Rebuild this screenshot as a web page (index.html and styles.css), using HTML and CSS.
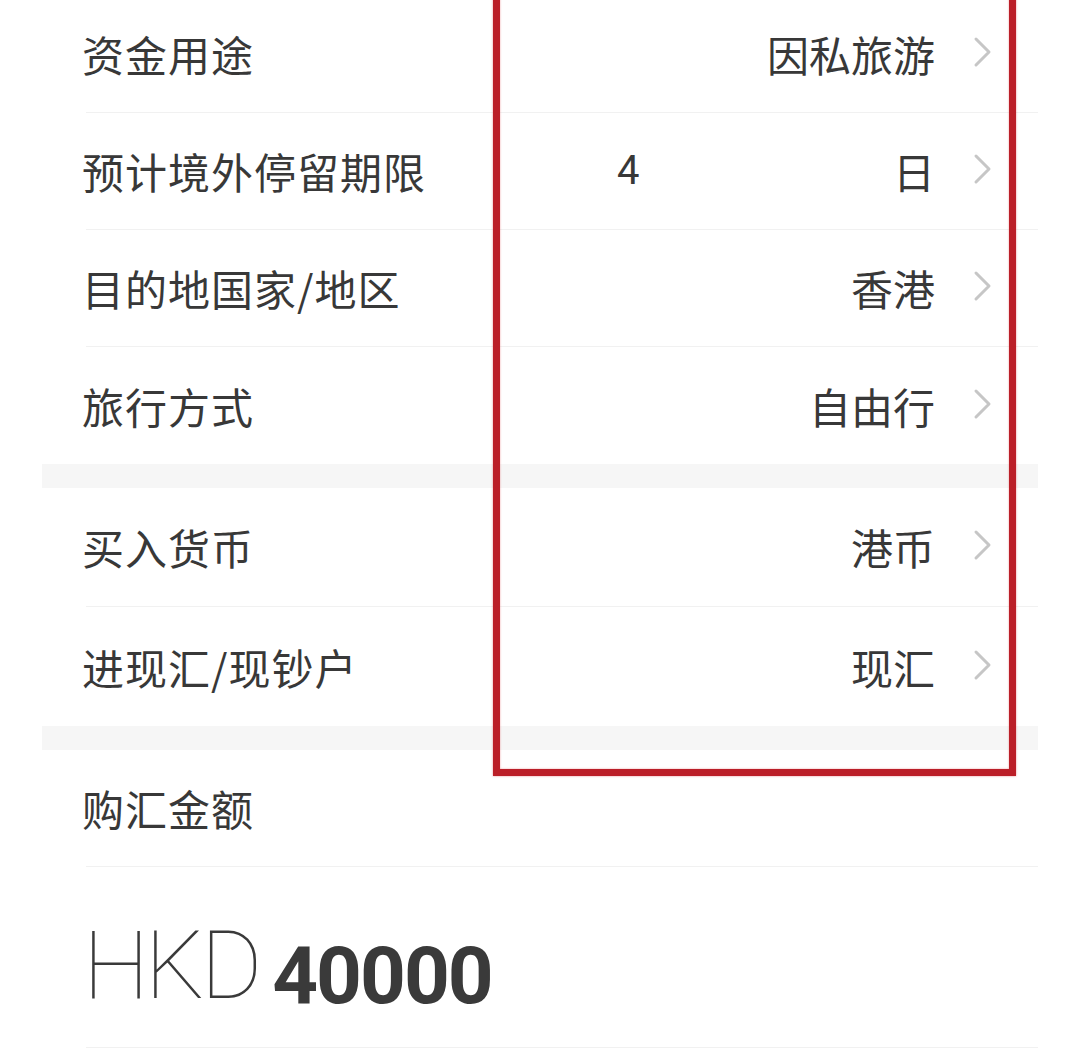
FILE: index.html
```html
<!DOCTYPE html>
<html lang="zh-CN">
<head>
<meta charset="utf-8">
<title>购汇</title>
<link rel="stylesheet" href="styles.css">
</head>
<body>
<div class="page">
  <div class="group group-a">
    <div class="row first">
      <span class="label">资金用途</span>
      <span class="value"><span class="text">因私旅游</span></span>
      <svg class="chev" viewBox="0 0 20 32"><path d="M3 3 L16 16 L3 29"/></svg>
    </div>
    <div class="row">
      <span class="label">预计境外停留期限</span>
      <span class="value"><span class="num">4</span><span class="text">日</span></span>
      <svg class="chev" viewBox="0 0 20 32"><path d="M3 3 L16 16 L3 29"/></svg>
    </div>
    <div class="row">
      <span class="label">目的地国家/地区</span>
      <span class="value"><span class="text">香港</span></span>
      <svg class="chev" viewBox="0 0 20 32"><path d="M3 3 L16 16 L3 29"/></svg>
    </div>
    <div class="row last">
      <span class="label">旅行方式</span>
      <span class="value"><span class="text">自由行</span></span>
      <svg class="chev" viewBox="0 0 20 32"><path d="M3 3 L16 16 L3 29"/></svg>
    </div>
  </div>
  <div class="band"></div>
  <div class="group group-b">
    <div class="row tall">
      <span class="label">买入货币</span>
      <span class="value"><span class="text">港币</span></span>
      <svg class="chev" viewBox="0 0 20 32"><path d="M3 3 L16 16 L3 29"/></svg>
    </div>
    <div class="row tall last">
      <span class="label">进现汇/现钞户</span>
      <span class="value"><span class="text">现汇</span></span>
      <svg class="chev" viewBox="0 0 20 32"><path d="M3 3 L16 16 L3 29"/></svg>
    </div>
  </div>
  <div class="band band-b"></div>
  <div class="group group-c">
    <div class="row">
      <span class="label">购汇金额</span>
    </div>
    <div class="row amount-row">
      <span class="currency">HKD</span><span class="amount">40000</span>
    </div>
  </div>
  <div class="highlight"></div>
</div>
</body>
</html>
```
FILE: styles.css
```css
html, body {
  margin: 0;
  padding: 0;
  background: #ffffff;
}
body {
  font-family: "Noto Sans CJK SC", "Noto Sans", sans-serif;
  color: #363636;
  overflow: hidden;
}
.page {
  position: relative;
  width: 996px;
  margin-left: 42px;
  margin-top: -4px;
}
.group {
  background: #ffffff;
}
.row {
  box-sizing: border-box;
  height: 117px;
  margin-left: 44px;
  padding-right: 45px;
  display: flex;
  align-items: center;
  border-bottom: 1px solid #f1f1f1;
}
.row.tall {
  height: 119px;
}
.row.last {
  border-bottom: none;
}
.label {
  width: 533px;
  margin-left: -4px;
  font-size: 42px;
  line-height: 1;
  letter-spacing: 1px;
  color: #383838;
  white-space: nowrap;
}
.value {
  flex: 1;
  display: flex;
  justify-content: flex-end;
  align-items: center;
  font-size: 42px;
  line-height: 1;
  color: #383838;
  letter-spacing: 0;
}
.num {
  margin-right: auto;
  font-family: "Roboto", "Noto Sans", sans-serif;
  font-size: 40px;
  padding-left: 2px;
}
.chev {
  width: 20px;
  height: 32px;
  margin-left: 38px;
  margin-top: -4px;
  flex: none;
}
.chev path {
  fill: none;
  stroke: #c6c6c6;
  stroke-width: 3;
  stroke-linecap: round;
  stroke-linejoin: round;
}
.band {
  height: 24px;
  background: #f6f6f6;
}
.band-b {
  height: 24px;
}
.amount-row {
  height: 181px;
  align-items: center;
  padding-top: 18px;
}
.currency {
  font-family: "Roboto", "Noto Sans", sans-serif;
  font-weight: 100;
  font-size: 94px;
  letter-spacing: -4px;
  color: #3a3a3a;
  line-height: 1;
  margin-left: -3px;
}
.amount {
  font-family: "Roboto", "Noto Sans", sans-serif;
  font-weight: 700;
  font-size: 80px;
  color: #3a3a3a;
  line-height: 1;
  margin-left: 14px;
  letter-spacing: -2px;
  margin-top: 20px;
}
.highlight {
  position: absolute;
  left: 451px;
  top: -20px;
  width: 509px;
  height: 786px;
  border: 7px solid #bb1f28;
  box-shadow: 0 0 2px rgba(220, 70, 80, 0.6), inset 0 0 2px rgba(220, 70, 80, 0.6);
  pointer-events: none;
}
```
